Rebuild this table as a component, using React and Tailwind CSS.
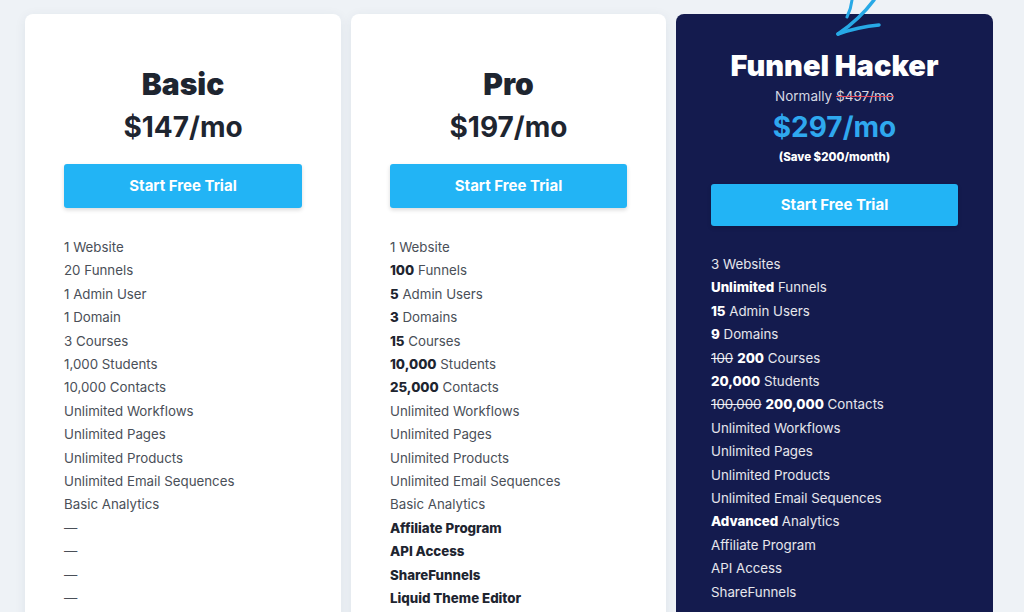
import React from 'react'

const font = { fontFamily: 'Inter, "Noto Sans", sans-serif' }

const basic = [
  [null, '1 Website'],
  [null, '20 Funnels'],
  [null, '1 Admin User'],
  [null, '1 Domain'],
  [null, '3 Courses'],
  [null, '1,000 Students'],
  [null, '10,000 Contacts'],
  [null, 'Unlimited Workflows'],
  [null, 'Unlimited Pages'],
  [null, 'Unlimited Products'],
  [null, 'Unlimited Email Sequences'],
  [null, 'Basic Analytics'],
  [null, '—'],
  [null, '—'],
  [null, '—'],
  [null, '—'],
]

const pro = [
  [null, '1 Website'],
  ['100', ' Funnels'],
  ['5', ' Admin Users'],
  ['3', ' Domains'],
  ['15', ' Courses'],
  ['10,000', ' Students'],
  ['25,000', ' Contacts'],
  [null, 'Unlimited Workflows'],
  [null, 'Unlimited Pages'],
  [null, 'Unlimited Products'],
  [null, 'Unlimited Email Sequences'],
  [null, 'Basic Analytics'],
  ['Affiliate Program', ''],
  ['API Access', ''],
  ['ShareFunnels', ''],
  ['Liquid Theme Editor', ''],
]

// last row sits below the fold in the screenshot
const hacker = [
  [null, '3 Websites'],
  ['Unlimited', ' Funnels'],
  ['15', ' Admin Users'],
  ['9', ' Domains'],
  ['200', ' Courses', '100'],
  ['20,000', ' Students'],
  ['200,000', ' Contacts', '100,000'],
  [null, 'Unlimited Workflows'],
  [null, 'Unlimited Pages'],
  [null, 'Unlimited Products'],
  [null, 'Unlimited Email Sequences'],
  ['Advanced', ' Analytics'],
  [null, 'Affiliate Program'],
  [null, 'API Access'],
  [null, 'ShareFunnels'],
]

function Features({ items, dark }) {
  return (
    <ul className={`text-[13.3px] leading-[23.4px] ${dark ? 'mt-[27px] text-white/90' : 'mt-[28px] text-[#4a4f58]'}`}>
      {items.map(([bold, rest, old], i) => (
        <li key={i} className="whitespace-nowrap">
          {old && <span className="line-through mr-1">{old}</span>}
          {bold && <b className={`font-extrabold ${dark ? 'text-white' : 'text-[#1e2530]'}`}>{bold}</b>}
          {rest}
        </li>
      ))}
    </ul>
  )
}

function TrialButton({ h }) {
  return (
    <button className={`w-full ${h} rounded-[3px] bg-[#22b4f5] text-white text-[15px] font-bold shadow-[0_2px_4px_rgba(0,0,0,0.15)]`}>
      Start Free Trial
    </button>
  )
}

function LightCard({ name, price, items }) {
  return (
    <div className="bg-white rounded-lg shadow-[0_2px_12px_rgba(30,50,90,0.07)] px-[39px] pt-[50px] h-[640px]">
      <h2 className="text-center text-[30px] leading-[40px] font-black text-[#1e2530]">{name}</h2>
      <p className="mt-[3px] text-center text-[28px] leading-[40px] font-bold text-[#1e2530]">{price}</p>
      <div className="mt-[17px]">
        <TrialButton h="h-[44px]" />
      </div>
      <Features items={items} />
    </div>
  )
}

export default function App() {
  return (
    <div style={font} className="relative w-[1024px] h-[612px] overflow-hidden bg-[#eef2f6]">
      <div className="grid grid-cols-[316px_315px_317px] gap-[10px] pl-[25px] pt-[14px]">
        <LightCard name="Basic" price="$147/mo" items={basic} />
        <LightCard name="Pro" price="$197/mo" items={pro} />
        <div className="bg-[#141b4e] rounded-lg px-[35px] pt-[32px] h-[640px]">
          <h2 className="text-center text-[29px] leading-[40px] font-black text-white">Funnel Hacker</h2>
          <p className="text-center text-[13.5px] leading-[20px] text-[#d4d7e2]">
            Normally <span className="line-through decoration-[#e0465a]">$497/mo</span>
          </p>
          <p className="mt-[1px] text-center text-[28px] leading-[40px] font-bold text-[#2fa8ef]">$297/mo</p>
          <p className="text-center text-[11.5px] leading-[20px] font-extrabold text-white">(Save $200/month)</p>
          <div className="mt-[17px]">
            <TrialButton h="h-[42px]" />
          </div>
          <Features items={hacker} dark />
        </div>
      </div>
      <svg className="absolute left-0 top-0" width="1024" height="60" viewBox="0 0 1024 60" fill="none">
        <path d="M852 0 Q851 9 847 17" stroke="#27a9e6" strokeWidth="3" strokeLinecap="round" />
        <path d="M874 0 Q860 19 838 34" stroke="#27a9e6" strokeWidth="3.5" strokeLinecap="round" />
        <path d="M838 34 Q858 27 879 25" stroke="#27a9e6" strokeWidth="3.5" strokeLinecap="round" />
      </svg>
    </div>
  )
}
